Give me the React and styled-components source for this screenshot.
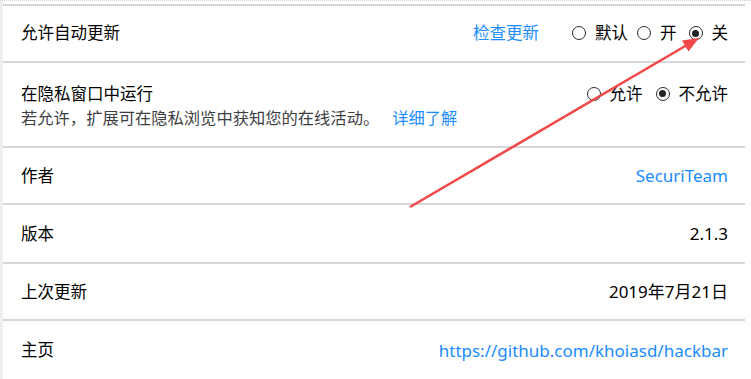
import styled, { createGlobalStyle } from "styled-components";

const GlobalStyle = createGlobalStyle`
  html, body {
    margin: 0;
    padding: 0;
    background: #fff;
  }
  body {
    font-family: "Noto Sans", "Noto Sans CJK SC", sans-serif;
    color: #0c0c0d;
  }
`;

const Page = styled.div`
  position: relative;
  width: 751px;
  height: 379px;
  overflow: hidden;
  display: flex;
  border-top: 1px dotted #cfcfcf;
  box-sizing: border-box;
`;

const Strip = styled.div`
  width: 3px;
  background: #efefef;
  flex-shrink: 0;
`;

const Card = styled.div`
  width: 742px;
  padding-top: 3px;
  display: flex;
  flex-direction: column;
`;

const Row = styled.div`
  box-sizing: border-box;
  height: ${(p) => p.h}px;
  border-top: 2px solid #d7d7d9;
  padding: ${(p) => (p.top ? "20px 17px 0 18px" : "0 17px 0 18px")};
  display: flex;
  align-items: ${(p) => (p.top ? "flex-start" : "center")};
  justify-content: space-between;
  font-size: 16.5px;
`;

const Label = styled.div`
  line-height: 22px;
  color: #000;
`;

const Info = styled.div`
  display: flex;
  flex-direction: column;
`;

const Sub = styled.div`
  line-height: 26px;
  color: #3e3e42;
  font-size: 16.3px;
`;

const Link = styled.span`
  color: #1a8cff;
  font-size: ${(p) => (p.latin ? "17px" : "inherit")};
  margin-left: ${(p) => p.ml || 0}px;
  margin-right: ${(p) => p.mr || 0}px;
`;

const Value = styled.div`
  line-height: 22px;
  font-size: 17px;
  color: #000;
`;

const Controls = styled.div`
  display: flex;
  align-items: center;
  line-height: 22px;
  color: #000;
`;

const Option = styled.label`
  display: flex;
  align-items: center;
  margin-left: ${(p) => p.gap}px;
`;

const Radio = styled.span`
  box-sizing: border-box;
  width: 14px;
  height: 14px;
  border-radius: 50%;
  border: 1.5px solid #2a2a2e;
  margin-right: 9px;
  display: flex;
  align-items: center;
  justify-content: center;

  &::after {
    content: "";
    width: 7px;
    height: 7px;
    border-radius: 50%;
    background: ${(p) => (p.checked ? "#222" : "transparent")};
  }
`;

const Overlay = styled.svg`
  position: absolute;
  left: 0;
  top: 0;
  pointer-events: none;
`;

const App = () => {
  return (
    <>
      <GlobalStyle />
      <Page>
        <Strip />
        <Card>
          <Row h={57}>
            <Label>允许自动更新</Label>
            <Controls>
              <Link mr={33}>检查更新</Link>
              <Option gap={0}>
                <Radio />
                默认
              </Option>
              <Option gap={9}>
                <Radio />
                开
              </Option>
              <Option gap={12}>
                <Radio checked />
                关
              </Option>
            </Controls>
          </Row>
          <Row h={86} top>
            <Info>
              <Label>在隐私窗口中运行</Label>
              <Sub>
                若允许，扩展可在隐私浏览中获知您的在线活动。
                <Link ml={13}>详细了解</Link>
              </Sub>
            </Info>
            <Controls>
              <Option gap={0}>
                <Radio />
                允许
              </Option>
              <Option gap={13}>
                <Radio checked />
                不允许
              </Option>
            </Controls>
          </Row>
          <Row h={58}>
            <Label>作者</Label>
            <Link latin>SecuriTeam</Link>
          </Row>
          <Row h={59}>
            <Label>版本</Label>
            <Value>2.1.3</Value>
          </Row>
          <Row h={58}>
            <Label>上次更新</Label>
            <Value>2019年7月21日</Value>
          </Row>
          <Row h={60}>
            <Label>主页</Label>
            <Link latin>https://github.com/khoiasd/hackbar</Link>
          </Row>
        </Card>
        <Overlay width="751" height="379">
          <line x1="410" y1="206" x2="687" y2="44" stroke="#f24848" strokeWidth="2.5" />
          <polygon points="699,37 688.5,50.5 682,39.5" fill="#f24848" />
        </Overlay>
      </Page>
    </>
  );
};

export default App;
